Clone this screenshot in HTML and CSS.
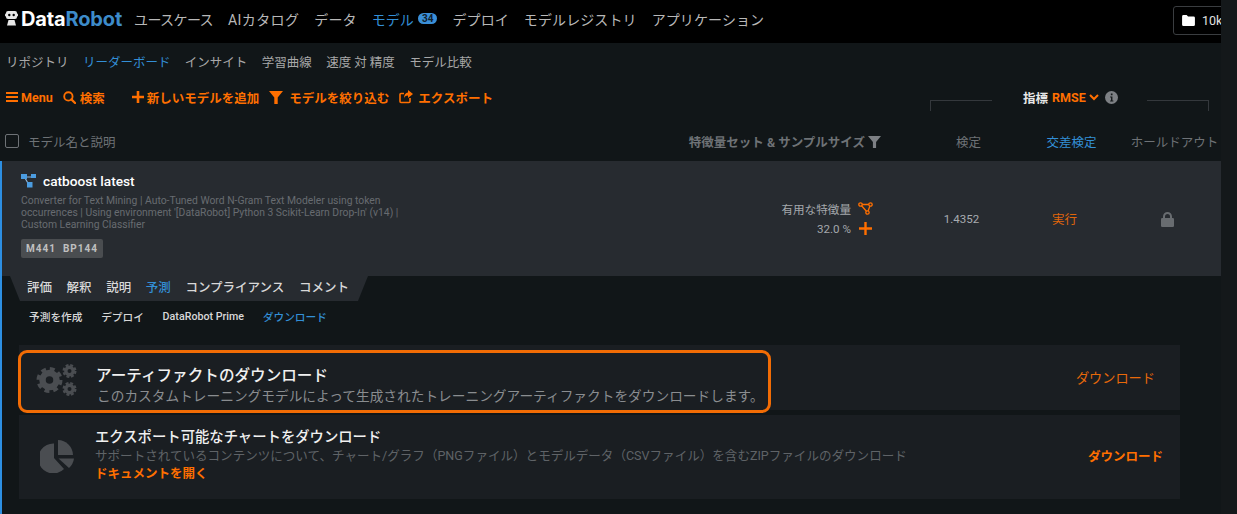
FILE: index.html
```html
<!DOCTYPE html>
<html lang="ja">
<head>
    <meta charset="UTF-8">
    <title>DataRobot</title>
    <link rel="stylesheet" href="styles.css">
</head>
<body>
<div class="page">
    <!-- Top navigation -->
    <header class="topbar">
        <div class="logo">
            <svg class="logo-mark" viewBox="0 0 13 15" width="13" height="15">
                <rect x="1" y="0" width="11" height="8" rx="2" fill="#e8e8e8"/>
                <rect x="0" y="2.500" width="13" height="3" rx="1" fill="#e8e8e8"/>
                <circle cx="4.300" cy="4" r="1.200" fill="#000"/>
                <circle cx="8.700" cy="4" r="1.200" fill="#000"/>
                <path d="M3.500 9h6l1.500 5.500H2z" fill="#e8e8e8"/>
            </svg>
            <span class="logo-data">Data</span><span class="logo-robot">Robot</span>
        </div>
        <nav class="main-nav">
            <a href="#" class="nav-tight">ユースケース</a>
            <a href="#" class="nav-wide">AIカタログ</a>
            <a href="#">データ</a>
            <a href="#" class="active">モデル<span class="badge">34</span></a>
            <a href="#">デプロイ</a>
            <a href="#">モデルレジストリ</a>
            <a href="#">アプリケーション</a>
        </nav>
        <div class="project">
            <svg viewBox="0 0 14 12" width="13" height="11"><path d="M0 1.500A1.500 1.500 0 0 1 1.500 0h3.500l1.500 1.500h6A1.500 1.500 0 0 1 14 3v7.500a1.500 1.500 0 0 1-1.500 1.500h-11A1.500 1.500 0 0 1 0 10.500z" fill="#fff"/></svg>
            <span>10k</span>
        </div>
    </header>

    <nav class="sub-nav">
        <a href="#">リポジトリ</a>
        <a href="#" class="active">リーダーボード</a>
        <a href="#">インサイト</a>
        <a href="#">学習曲線</a>
        <a href="#">速度 対 精度</a>
        <a href="#">モデル比較</a>
    </nav>

    <!-- Toolbar -->
    <div class="toolbar">
        <a href="#" class="tool tool-menu">
            <svg viewBox="0 0 12 12" width="12" height="12"><path d="M0 1h12v2H0zM0 5h12v2H0zM0 9h12v2H0z" fill="currentColor"/></svg>Menu
        </a>
        <a href="#" class="tool tool-search">
            <svg viewBox="0 0 14 14" width="13" height="13"><circle cx="5.800" cy="5.800" r="4.500" fill="none" stroke="currentColor" stroke-width="2"/><path d="M9 9l4 4" stroke="currentColor" stroke-width="2.400" stroke-linecap="round"/></svg>検索
        </a>
        <a href="#" class="tool tool-add">
            <svg viewBox="0 0 12 12" width="12" height="12"><path d="M4.700 0h2.600v4.700H12v2.600H7.300V12H4.700V7.300H0V4.700h4.700z" fill="currentColor"/></svg>新しいモデルを追加
        </a>
        <a href="#" class="tool tool-filter">
            <svg viewBox="0 0 14 14" width="14" height="14"><path d="M0 1h14L8.700 7.500V14H5.300V7.500z" fill="currentColor"/></svg>モデルを絞り込む
        </a>
        <a href="#" class="tool tool-export">
            <svg viewBox="0 0 14 14" width="14" height="14"><path d="M11 8v3.500a1 1 0 0 1-1 1H2a1 1 0 0 1-1-1v-7a1 1 0 0 1 1-1h3" fill="none" stroke="currentColor" stroke-width="1.600"/><path d="M9 0l5 4-5 4V5.600C6.800 5.600 5.500 6.500 5 8.500 4.800 5 6.500 2.800 9 2.500z" fill="currentColor"/></svg>エクスポート
        </a>
        <div class="metric">
            <span class="metric-line line-left"></span>
            <span class="metric-label">指標</span>
            <span class="metric-value">RMSE</span>
            <svg viewBox="0 0 10 7" width="10" height="7"><path d="M1 1l4 4 4-4" fill="none" stroke="#ff6f00" stroke-width="2"/></svg>
            <svg class="metric-info" viewBox="0 0 14 14" width="13" height="13"><circle cx="7" cy="7" r="7" fill="#7d8084"/><path d="M5.500 6h2.500v4.200h1v1H5.500v-1h1V7h-1zM6.300 2.700h1.800v2H6.300z" fill="#15191b"/></svg>
            <span class="metric-line line-right"></span>
        </div>
    </div>

    <!-- Leaderboard header -->
    <div class="table-head">
        <div class="head-name"><span class="checkbox"></span>モデル名と説明</div>
        <div class="head-features">特徴量セット &amp; サンプルサイズ
            <svg viewBox="0 0 14 14" width="13" height="13"><path d="M0 1h14L8.700 7.500V14H5.300V7.500z" fill="#7d8084"/></svg>
        </div>
        <div class="head-col">検定</div>
        <div class="head-col active">交差検定</div>
        <div class="head-col">ホールドアウト</div>
    </div>

    <div class="model">
        <!-- Model row -->
        <div class="model-row">
            <div class="model-info">
                <div class="model-title">
                    <svg viewBox="0 0 15 14" width="15" height="14"><path d="M3 3h9M4 4l4 7" stroke="#8fb8dc" stroke-width="1.200"/><rect width="6" height="5" fill="#4b9ce0"/><rect x="10" width="5" height="4" fill="#4b9ce0"/><rect x="6" y="8" width="5.500" height="5.500" fill="#4b9ce0"/></svg>
                    catboost latest
                </div>
                <p class="model-desc">Converter for Text Mining | Auto-Tuned Word N-Gram Text Modeler using token occurrences | Using environment '[DataRobot] Python 3 Scikit-Learn Drop-In' (v14) | Custom Learning Classifier</p>
                <span class="tag">M441&nbsp;&nbsp;BP144</span>
            </div>
            <div class="model-features">
                <div class="feature-line">有用な特徴量
                    <svg viewBox="0 0 15 13" width="15" height="13"><path d="M2.500 2.500h10M2.500 2.500l7 8M12.500 2.500l-3 8" fill="none" stroke="#ff6f00" stroke-width="1.300"/><circle cx="2.500" cy="2.500" r="1.700" fill="#272b30" stroke="#ff6f00" stroke-width="1.300"/><circle cx="12.500" cy="2.500" r="1.700" fill="#272b30" stroke="#ff6f00" stroke-width="1.300"/><circle cx="9.500" cy="10.500" r="1.700" fill="#272b30" stroke="#ff6f00" stroke-width="1.300"/></svg>
                </div>
                <div class="feature-line">32.0 %
                    <svg viewBox="0 0 15 13" width="15" height="13"><path d="M6.300 0h2.400v5.300H14v2.400H8.700V13H6.300V7.700H1V5.300h5.300z" fill="#ff6f00"/></svg>
                </div>
            </div>
            <div class="model-col">1.4352</div>
            <div class="model-col run">実行</div>
            <div class="model-col lock">
                <svg viewBox="0 0 13 15" width="13" height="15"><path d="M3 6.500V4.500a3.500 3.500 0 0 1 7 0v2" fill="none" stroke="#686c70" stroke-width="2"/><rect y="6" width="13" height="9" rx="1.200" fill="#686c70"/></svg>
            </div>
        </div>

        <!-- Tabs -->
        <div class="tabs">
            <a href="#">評価</a>
            <a href="#">解釈</a>
            <a href="#">説明</a>
            <a href="#" class="active">予測</a>
            <a href="#">コンプライアンス</a>
            <a href="#">コメント</a>
        </div>
        <div class="sub-tabs">
            <a href="#">予測を作成</a>
            <a href="#">デプロイ</a>
            <a href="#">DataRobot Prime</a>
            <a href="#" class="active">ダウンロード</a>
        </div>

        <!-- Download cards -->
        <div class="card card-artifact">
            <div class="card-icon">
                <svg viewBox="0 0 42 32" width="42" height="32">
                    <circle cx="13.500" cy="16" r="11" fill="none" stroke="#4a4d51" stroke-width="4" stroke-dasharray="4.800 3.840"/>
                    <circle cx="13.500" cy="16" r="7" fill="none" stroke="#4a4d51" stroke-width="6.500"/>
                    <circle cx="33.500" cy="7" r="5.800" fill="none" stroke="#4a4d51" stroke-width="2.400" stroke-dasharray="2.800 1.760"/>
                    <circle cx="33.500" cy="7" r="3.700" fill="none" stroke="#4a4d51" stroke-width="3.400"/>
                    <circle cx="33.500" cy="25" r="5.800" fill="none" stroke="#4a4d51" stroke-width="2.400" stroke-dasharray="2.800 1.760"/>
                    <circle cx="33.500" cy="25" r="3.700" fill="none" stroke="#4a4d51" stroke-width="3.400"/>
                </svg>
            </div>
            <div class="card-text">
                <div class="card-title">アーティファクトのダウンロード</div>
                <div class="card-desc">このカスタムトレーニングモデルによって生成されたトレーニングアーティファクトをダウンロードします。</div>
            </div>
            <a href="#" class="card-action">ダウンロード</a>
        </div>
        <div class="card card-charts">
            <div class="card-icon">
                <svg viewBox="0 0 34 33" width="34" height="33">
                    <path d="M14 3.500V18l10 11A15 15 0 1 1 14 3.500z" fill="#4a4d51"/>
                    <path d="M18 0a15.500 15.500 0 0 1 15 15H18z" fill="#4a4d51"/>
                    <path d="M18.500 18.500H34a15.500 15.500 0 0 1-5 9.500z" fill="#4a4d51"/>
                </svg>
            </div>
            <div class="card-text">
                <div class="card-title">エクスポート可能なチャートをダウンロード</div>
                <div class="card-desc">サポートされているコンテンツについて、チャート/グラフ（PNGファイル）とモデルデータ（CSVファイル）を含むZIPファイルのダウンロード</div>
                <a href="#" class="card-link">ドキュメントを開く</a>
            </div>
            <a href="#" class="card-action">ダウンロード</a>
        </div>
    </div>
</div>
<div class="scrollbar"></div>
</body>
</html>
```

FILE: styles.css
```css
html, body {
    height: 100%;
    margin: 0;
}

body {
    display: flex;
    overflow: hidden;
    background-color: #111618;
    color: #c8c8c8;
    font-family: Roboto, "Noto Sans CJK JP", sans-serif;
    font-size: 12.5px;
}

a {
    color: inherit;
    text-decoration: none;
}

svg {
    display: block;
    flex: none;
}

.page {
    width: 1221px;
    flex: none;
    overflow: hidden;
}

.scrollbar {
    flex: 1;
    background-color: #14181a;
}

/* top bar */
.topbar {
    display: flex;
    align-items: center;
    height: 43px;
    padding: 0 0 6px 5px;
    box-sizing: border-box;
    background-color: #000;
    overflow: hidden;
}

.logo {
    display: flex;
    align-items: center;
    width: 129px;
    flex: none;
    font-family: Inter, sans-serif;
    font-size: 20px;
    font-weight: 700;
    letter-spacing: -0.15px;
}

.logo-mark {
    margin-right: 3px;
}

.logo-data {
    color: #fff;
}

.logo-robot {
    color: #3d8bc9;
}

.main-nav {
    display: flex;
    gap: 15px;
    font-size: 14px;
    letter-spacing: 0.1px;
    color: #b8b8b8;
    white-space: nowrap;
}

.main-nav .nav-tight {
    letter-spacing: -0.6px;
}

.main-nav .nav-wide {
    letter-spacing: 0.4px;
}

.main-nav .active {
    display: flex;
    align-items: center;
}

.badge {
    margin-left: 4px;
    padding: 0 4px;
    border-radius: 6px;
    background-color: #3a8fd8;
    color: #10202c;
    font-size: 10px;
    font-weight: 700;
    line-height: 11px;
    letter-spacing: 0;
}

.project {
    display: flex;
    align-items: center;
    align-self: flex-start;
    gap: 7px;
    margin: 6px -12px 0 auto;
    width: 60px;
    height: 29px;
    padding-left: 8px;
    border: 1px solid #3a3d40;
    border-radius: 3px;
    color: #e0e0e0;
    flex: none;
    box-sizing: border-box;
}

/* sub navigation */
.sub-nav {
    display: flex;
    align-items: center;
    gap: 14.400px;
    height: 38px;
    padding: 0 0 1px 6px;
    box-sizing: border-box;
    color: #a8a8a8;
}

.sub-nav .active,
.main-nav .active,
.head-col.active,
.tabs .active,
.sub-tabs .active {
    color: #338fd6;
}

/* toolbar */
.toolbar {
    display: flex;
    align-items: flex-start;
    height: 41px;
    padding: 7px 12px 0 6px;
    box-sizing: border-box;
    color: #ff6f00;
    font-weight: 700;
}

.tool {
    display: flex;
    align-items: center;
    gap: 3px;
    height: 18px;
}

.tool-search {
    margin-left: 10px;
    gap: 4px;
}

.tool-add {
    margin-left: 27px;
}

.tool-filter {
    margin-left: 10px;
    gap: 6px;
}

.tool-export {
    margin-left: 10px;
    gap: 5px;
}

.metric {
    display: flex;
    align-items: center;
    margin-left: auto;
    width: 279px;
    height: 18px;
}

.metric-line {
    align-self: flex-start;
    flex: none;
    width: 61px;
    height: 10px;
    margin-top: 12px;
    border-top: 1px solid #34383c;
}

.line-left {
    margin-right: 31px;
    border-left: 1px solid #34383c;
}

.line-right {
    margin-left: auto;
    border-right: 1px solid #34383c;
}

.metric-label {
    color: #e8e8e8;
    margin-right: 4px;
}

.metric-value {
    margin-right: 3px;
}

.metric-info {
    margin-left: 6px;
}

/* table header */
.table-head {
    display: grid;
    grid-template-columns: 1fr auto 103px 103px 103px;
    align-items: center;
    height: 39px;
    margin-right: -5px;
    padding-bottom: 1px;
    box-sizing: border-box;
    color: #6e7276;
    white-space: nowrap;
}

.head-name {
    display: flex;
    align-items: center;
    padding-left: 5px;
}

.checkbox {
    width: 12px;
    height: 12px;
    margin-right: 9px;
    border: 1px solid #6e7276;
    border-radius: 2px;
}

.head-features {
    display: flex;
    align-items: center;
    justify-content: flex-end;
    gap: 3px;
    padding-right: 36px;
    font-weight: 700;
}

.head-col {
    text-align: center;
}

/* model */
.model {
    border-left: 2px solid #2d8fe2;
    height: 353px;
}

.model-row {
    display: grid;
    grid-template-columns: 1fr auto 103px 103px 103px;
    align-items: center;
    height: 115px;
    padding-right: 2px;
    background-color: #272b30;
}

.model-info {
    padding: 12px 0 0 19px;
    align-self: start;
}

.model-title {
    display: flex;
    align-items: center;
    gap: 7px;
    height: 16px;
    color: #fff;
    font-size: 13.700px;
    font-weight: 500;
}

.model-desc {
    width: 385px;
    margin: 6px 0 8px;
    color: #676b70;
    font-size: 10.350px;
    line-height: 12px;
}

.tag {
    display: inline-block;
    height: 19px;
    padding: 0 5px;
    border-radius: 2px;
    background-color: #4a4d50;
    color: #c0c0c0;
    font-size: 10px;
    font-weight: 700;
    letter-spacing: 1px;
    line-height: 19px;
}

.model-features {
    padding-right: 37px;
    font-size: 11.600px;
    color: #a4a8ac;
    white-space: nowrap;
}

.feature-line {
    display: flex;
    align-items: center;
    justify-content: flex-end;
    gap: 7px;
    height: 20px;
}

.model-col {
    display: flex;
    justify-content: center;
    font-size: 11.500px;
    color: #a8acb0;
}

.model-col.run {
    color: #e0660a;
    font-size: 12.500px;
}

.model-col.lock {
    padding-top: 2px;
}

/* tabs */
.tabs {
    display: flex;
    align-items: center;
    gap: 14.600px;
    width: 358px;
    height: 25px;
    margin-left: 8px;
    padding-left: 17px;
    padding-bottom: 4px;
    box-sizing: border-box;
    background-color: #272b30;
    clip-path: polygon(0 0, 100% 0, 97.200% 100%, 2.800% 100%);
    color: #d8d8d8;
    font-weight: 500;
}

.sub-tabs {
    display: flex;
    align-items: center;
    gap: 18.700px;
    height: 30px;
    padding-left: 27px;
    margin-bottom: 14px;
    color: #d8d8d8;
    font-size: 10.700px;
    font-weight: 500;
}

/* cards */
.card {
    display: flex;
    align-items: center;
    position: relative;
    width: 1161px;
    margin-left: 17px;
    background-color: #1a1e22;
}

.card-artifact {
    height: 65px;
    margin-bottom: 5px;
}

.card-charts {
    height: 84px;
}

.card-icon {
    display: flex;
    justify-content: center;
    width: 76px;
    flex: none;
}

.card-artifact .card-icon {
    margin-top: 5px;
}

.card-charts .card-icon {
    margin-top: -1px;
}

.card-artifact::after {
    content: "";
    position: absolute;
    left: -1px;
    top: 5px;
    width: 747px;
    height: 57px;
    border: 3px solid #f26c05;
    border-radius: 9px;
}

.card-title {
    color: #f0f0f0;
    font-size: 15.600px;
    font-weight: 500;
    line-height: 20px;
    padding-left: 1px;
}

.card-desc {
    color: #8a8d90;
    font-size: 13.700px;
    line-height: 20px;
    padding-left: 2px;
}

.card-artifact .card-text {
    margin-top: 17px;
}

.card-action {
    margin-left: auto;
    color: #e8690a;
}

.card-artifact .card-action {
    padding-right: 25px;
    font-size: 13.200px;
}

.card-charts .card-text {
    margin-top: -3px;
}

.card-charts .card-title {
    padding-left: 0;
    font-size: 14.350px;
    line-height: 19px;
}

.card-charts .card-desc {
    padding: 0;
    font-size: 12.560px;
    line-height: 18px;
    color: #5f6367;
}

.card-charts .card-action {
    margin-bottom: 4px;
    padding-right: 17px;
    font-weight: 700;
    color: #ff6f00;
}

.card-link {
    display: block;
    color: #ff6f00;
    font-weight: 700;
    line-height: 18px;
}
```
